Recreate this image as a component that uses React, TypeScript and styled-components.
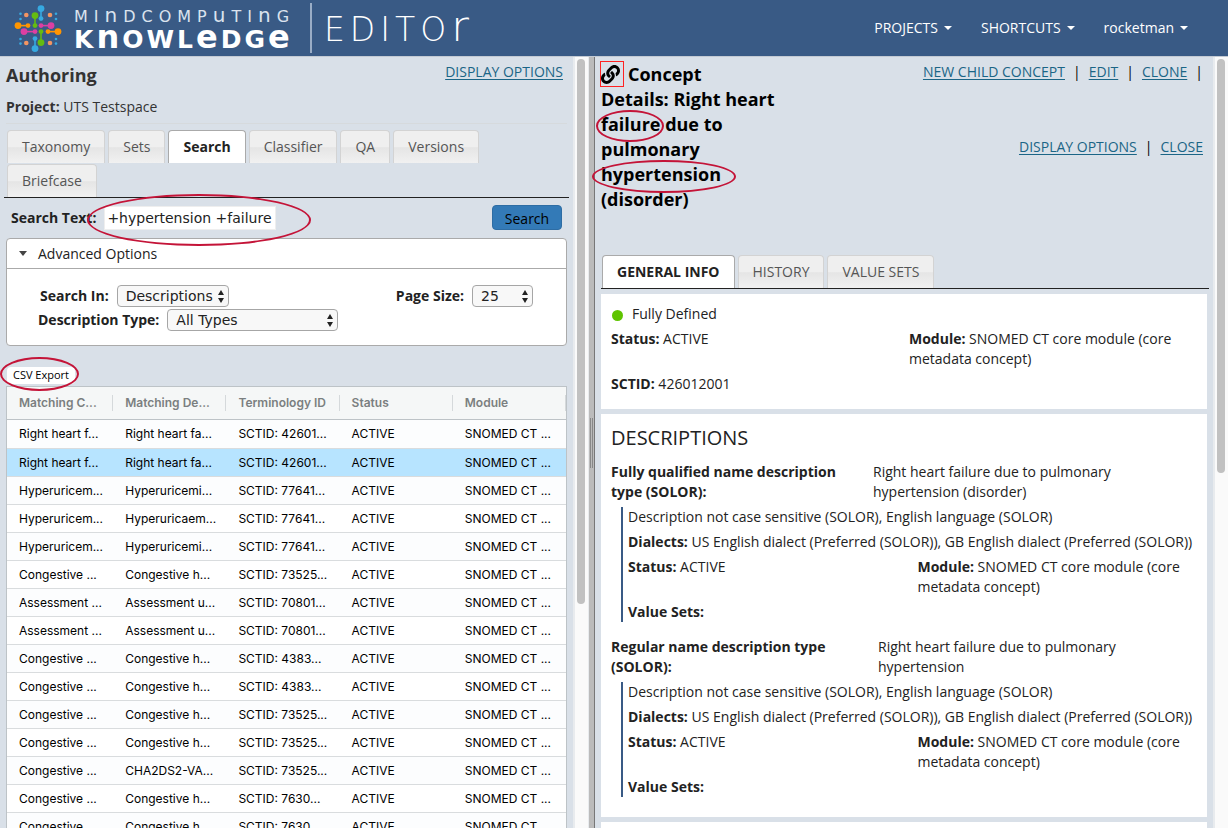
import React from 'react';
import styled, { createGlobalStyle, css } from 'styled-components';
import { FaLink } from 'react-icons/fa';

const sans = '"Open Sans", "Noto Sans", sans-serif';
const wide = '"DejaVu Sans", Verdana, sans-serif';
const gridFont = 'Inter, Roboto, sans-serif';

const GlobalStyle = createGlobalStyle`
  *, *::before, *::after { box-sizing: border-box; }
  body {
    margin: 0;
    background: #d9e0e8;
    color: #222;
    font: 14px/20px ${sans};
  }
  h1, h2, p { margin: 0; }
`;

const Page = styled.div`
  display: flex;
  flex-direction: column;
  height: 100vh;
  overflow: hidden;
`;

/* ---------- header ---------- */

const Header = styled.header`
  display: flex;
  flex: none;
  align-items: center;
  justify-content: space-between;
  height: 56px;
  padding: 0 40px 0 13px;
  background: #395a85;
  color: #fff;
`;

const Brand = styled.a`
  display: flex;
  align-items: center;
  color: #fff;
  text-decoration: none;
  font-family: ${wide};
`;

const Wordmark = styled.span`
  display: flex;
  flex-direction: column;
  width: 227px;
  margin-left: 11px;
  white-space: nowrap;
`;

const BrandTop = styled.span`
  font-size: 16px;
  line-height: 18px;
  letter-spacing: 6px;
  color: #dbe3ee;
  big { font-size: 20px; line-height: 18px; }
`;

const BrandMain = styled.span`
  font-size: 25px;
  font-weight: 700;
  line-height: 22px;
  letter-spacing: 3px;
  big { font-size: 32px; line-height: 22px; }
`;

const BrandProduct = styled.span`
  margin-left: 9px;
  padding-left: 12px;
  border-left: 2px solid #9aadc6;
  font-size: 33px;
  font-weight: 200;
  line-height: 46px;
  letter-spacing: 5px;
  big { font-size: 43px; line-height: 46px; }
`;

const Nav = styled.nav`
  display: flex;
  gap: 29px;
`;

const NavButton = styled.button`
  display: flex;
  align-items: center;
  gap: 6px;
  padding: 0;
  border: 0;
  background: none;
  color: #fff;
  font: 14px/20px ${sans};
  &::after {
    content: '';
    border: 4px solid transparent;
    border-top-color: #fff;
    border-bottom: 0;
  }
`;

/* ---------- panes ---------- */

const Workspace = styled.main`
  display: flex;
  flex: 1;
  min-height: 0;
  border-top: 1px solid #c3cad3;
  overflow: hidden;
`;

const Pane = styled.section<{ $grow: number }>`
  flex: ${p => p.$grow} 1 12px;
  min-width: 0;
  padding: 5px 6px 0;
`;

const Track = styled.div`
  flex: none;
  width: 15px;
  padding: 2px;
  border-left: 2px solid #e8ebee;
  background: #fafafa;
`;

const Thumb = styled.div<{ $size: number }>`
  width: 8px;
  height: ${p => p.$size}%;
  border-radius: 4px;
  background: #c1c1c1;
`;

const Splitter = styled.div`
  display: flex;
  flex: none;
  align-items: center;
  justify-content: center;
  width: 7px;
  border-left: 1px solid #e8ebee;
  border-right: 1px solid #777;
  background: #bbb;
  &::after {
    content: '';
    width: 3px;
    height: 50px;
    border: solid #888;
    border-width: 0 1px;
  }
`;

const Link = styled.a`
  color: #1b6586;
  text-decoration: underline;
  text-underline-offset: 2px;
`;

const Mark = styled.span`
  position: relative;
  display: inline-block;
`;

/* hand-drawn style highlight over the marked text */
const Ring = styled.span<{ $inset: string }>`
  position: absolute;
  inset: ${p => p.$inset};
  z-index: 2;
  border: 2px solid #c41438;
  border-radius: 50%;
  pointer-events: none;
`;

/* ---------- tabs ---------- */

const Tabs = styled.div<{ $side?: number }>`
  display: flex;
  flex-wrap: wrap;
  gap: 1px 3px;
  margin: 0 -2px 0 ${p => p.$side ?? 0}px;
  padding-left: ${p => (p.$side ? 3 : 1)}px;
  border-bottom: 1px solid #222;
`;

const Tab = styled.button<{ $active?: boolean }>`
  height: 33px;
  padding: 0 14px;
  border: 1px solid #d3d3d3;
  border-bottom: 0;
  border-radius: 4px 4px 0 0;
  background: linear-gradient(#efefef 0 50%, #e5e5e5 52%, #f1f1f1);
  color: #555;
  font: 14px/20px ${sans};
  ${p => p.$active && css`
    border-color: #aaa;
    background: #fff;
    color: #222;
    font-weight: 700;
  `}
`;

/* ---------- authoring pane ---------- */

const TopRow = styled.div`
  display: flex;
  justify-content: space-between;
  padding-right: 4px;
`;

const Title = styled.h1`
  color: #333;
  font-size: 18px;
  font-weight: 700;
  line-height: 26px;
`;

const Project = styled.p`
  margin: 9px 0 6px;
  padding-bottom: 6px;
  border-bottom: 1px solid #d6dadd;
  color: #333;
`;

const SearchRow = styled.form`
  display: flex;
  align-items: center;
  justify-content: space-between;
  padding: 7px 5px 8px;
`;

const Field = styled.div`
  display: flex;
  align-items: center;
  gap: 8px;
  label { font-weight: 700; }
`;

const TextInput = styled.input`
  width: 172px;
  height: 24px;
  padding: 0 2px;
  border: 1px solid #eee;
  background: #fff;
  color: #222;
  font: 14px/20px ${wide};
`;

const PrimaryButton = styled.button`
  width: 70px;
  height: 25px;
  padding: 2px 0 0;
  border: 1px solid #2e6da4;
  border-radius: 4px;
  background: #337ab7;
  color: #000;
  font: 14px/20px ${sans};
`;

const Panel = styled.section`
  height: 108px;
  border: 1px solid #aaa;
  border-radius: 4px;
  background: #fff;
`;

const PanelHead = styled.button`
  display: flex;
  align-items: center;
  gap: 11px;
  width: 100%;
  height: 30px;
  padding: 0 12px;
  border: 0;
  border-bottom: 1px solid #aaa;
  background: none;
  color: #222;
  font: 14px/20px ${sans};
  &::before {
    content: '';
    border: 4px solid transparent;
    border-top: 5px solid #444;
    border-bottom: 0;
  }
`;

const Options = styled.div`
  display: flex;
  flex-direction: column;
  gap: 2px;
  padding: 16px 33px 0 31px;
`;

const OptionRow = styled.div`
  display: flex;
  justify-content: space-between;
  &:first-child { padding-left: 2px; }
`;

const Picker = styled.span<{ $width: number }>`
  position: relative;
  width: ${p => p.$width}px;
  height: 22px;
  select {
    width: 100%;
    height: 22px;
    padding: 0 8px;
    border: 1px solid #a6a6a6;
    border-radius: 4px;
    appearance: none;
    background: #f8f8f8;
    color: #222;
    font: 14px/20px ${wide};
  }
  svg {
    position: absolute;
    top: 5px;
    right: 4px;
    pointer-events: none;
  }
`;

const ExportMark = styled(Mark)`
  display: block;
  width: 68px;
  margin: 21px 0 2px 1px;
`;

const ExportButton = styled.button`
  display: block;
  width: 68px;
  height: 17px;
  padding: 0 0 2px;
  border: 0;
  border-radius: 4px;
  background: #fff;
  color: #000;
  font: 11px/15px ${sans};
`;

const Grid = styled.table`
  width: 100%;
  border-collapse: separate;
  border-spacing: 0;
  table-layout: fixed;
  border: 1px solid #bdc3c7;
  background: #fff;
  font-family: ${gridFont};
  font-size: 12px;
  color: #000;
  th, td {
    padding: 0 4px 0 12px;
    overflow: hidden;
    text-align: left;
    text-overflow: ellipsis;
    white-space: nowrap;
  }
  th {
    height: 33px;
    border-bottom: 1px solid #bdc3c7;
    background: linear-gradient(#d5d9db, #d5d9db) right center / 1px 16px no-repeat #f5f7f7;
    color: #7b7f80;
    font-weight: 600;
  }
`;

const GridRow = styled.tr<{ $selected?: boolean }>`
  height: 28px;
  background: ${p => (p.$selected ? '#b7e4ff' : '#fff')};
  &:nth-child(odd) { background: ${p => (p.$selected ? '#b7e4ff' : '#fcfdfe')}; }
  td { border-bottom: 1px solid #d9dcde; }
  &:first-child { height: 29px; }
`;

/* ---------- concept pane ---------- */

const ConceptHead = styled.div`
  display: flex;
  justify-content: space-between;
  min-height: 193px;
`;

const ConceptTitle = styled.h1`
  width: 200px;
  color: #000;
  font-size: 18px;
  font-weight: 700;
  line-height: 25px;
`;

const Permalink = styled.a`
  display: inline-flex;
  align-items: center;
  width: 24px;
  height: 26px;
  margin: -1px 4px 0 -1px;
  border: 1px solid #f22;
  color: #000;
  vertical-align: top;
`;

const Actions = styled.div`
  display: flex;
  flex-direction: column;
  align-items: flex-end;
  gap: 55px;
  padding-right: 4px;
`;

const ActionRow = styled.div`
  display: flex;
  gap: 8px;
  color: #000;
`;

const Card = styled.section<{ $bottom?: number }>`
  margin-top: 5px;
  padding: 10px 10px ${p => p.$bottom ?? 15}px;
  background: #fff;
`;

const Stack = styled.div`
  display: flex;
  flex-direction: column;
  gap: 5px;
`;

const Columns = styled.div`
  display: grid;
  grid-template-columns: 1fr 1fr;
  gap: 10px;
`;

const Defined = styled.p`
  display: flex;
  align-items: center;
  gap: 9px;
  padding-left: 1px;
  &::before {
    content: '';
    width: 11px;
    height: 11px;
    margin-top: 3px;
    border-radius: 50%;
    background: #5fc400;
  }
`;

const SectionTitle = styled.h2`
  font-size: 20px;
  font-weight: 400;
  line-height: 28px;
`;

const Description = styled.article`
  display: flex;
  flex-direction: column;
  gap: 5px;
  margin-top: 15px;
  ${SectionTitle} + & { margin-top: 10px; }
`;

const DescriptionHead = styled.div<{ $label: number }>`
  display: grid;
  grid-template-columns: ${p => p.$label}fr ${p => 586 - p.$label}fr;
  strong { padding-right: 16px; }
`;

const Detail = styled(Stack)`
  margin-left: 10px;
  padding-left: 5px;
  border-left: 2px solid #395a85;
`;

/* ---------- drawings ---------- */

const blue = '#36a9e1';
const green = '#65bc10';
const orange = '#ff9500';
const pink = '#dd3fa2';
const salmon = '#f39562';

const links: [string, number, number, number, number][] = [
  [blue, 28, 8, 28, 18],
  [green, 22, 15, 22, 25],
  [orange, 5, 25, 15, 25],
  [pink, 38, 25, 28, 25],
  [pink, 11, 31, 22, 31],
  [orange, 45, 31, 35, 31],
  [green, 28, 42, 28, 31],
  [blue, 22, 48, 22, 38],
];

const LogoMark = () => (
  <svg width="50" height="56" viewBox="0 0 50 56" aria-hidden="true">
    {links.map(([color, x1, y1, x2, y2]) => (
      <g key={`${x1}-${y1}`} fill={color} stroke={color}>
        <line x1={x1} y1={y1 + 0.6} x2={x2} y2={y2 + 0.6} strokeWidth="1.6" />
        <circle cx={x1} cy={y1 + 0.6} r="3.4" stroke="none" />
        <circle cx={x2} cy={y2 + 0.6} r="2.4" stroke="none" />
      </g>
    ))}
    {[13.3, 37].map(x => [15, 43].map(y => (
      <circle key={`${x}${y}`} cx={x} cy={y} r="2.3" fill={salmon} />
    )))}
    {[7.5, 43].map(x => [13.7, 19, 39, 43.6].map(y => (
      <circle key={`${x}${y}`} cx={x} cy={y} r="1.3" fill={blue} />
    )))}
  </svg>
);

const UpDown = () => (
  <svg width="8" height="13" viewBox="0 0 8 13" fill="#222" aria-hidden="true">
    <path d="M4 0 7 5H1Z" />
    <path d="M4 13 1 8h6Z" />
  </svg>
);

/* ---------- data ---------- */

const rows: [string, string, string][] = [
  ['Right heart f...', 'Right heart fa...', 'SCTID: 42601...'],
  ['Right heart f...', 'Right heart fa...', 'SCTID: 42601...'],
  ['Hyperuricem...', 'Hyperuricemi...', 'SCTID: 77641...'],
  ['Hyperuricem...', 'Hyperuricaem...', 'SCTID: 77641...'],
  ['Hyperuricem...', 'Hyperuricemi...', 'SCTID: 77641...'],
  ['Congestive ...', 'Congestive h...', 'SCTID: 73525...'],
  ['Assessment ...', 'Assessment u...', 'SCTID: 70801...'],
  ['Assessment ...', 'Assessment u...', 'SCTID: 70801...'],
  ['Congestive ...', 'Congestive h...', 'SCTID: 4383...'],
  ['Congestive ...', 'Congestive h...', 'SCTID: 4383...'],
  ['Congestive ...', 'Congestive h...', 'SCTID: 73525...'],
  ['Congestive ...', 'Congestive h...', 'SCTID: 73525...'],
  ['Congestive ...', 'CHA2DS2-VA...', 'SCTID: 73525...'],
  ['Congestive ...', 'Congestive h...', 'SCTID: 7630...'],
  ['Congestive ...', 'Congestive h...', 'SCTID: 7630...'],
];

const headings = ['Matching C...', 'Matching De...', 'Terminology ID', 'Status', 'Module'];

const ModuleText = () => (
  <p><strong>Module:</strong> SNOMED CT core module (core metadata concept)</p>
);

const DescriptionEntry = ({ label, value, width }: { label: string; value: string; width: number }) => (
  <Description>
    <DescriptionHead $label={width}>
      <strong>{label}</strong>
      <span>{value}</span>
    </DescriptionHead>
    <Detail>
      <p>Description not case sensitive (SOLOR), English language (SOLOR)</p>
      <p><strong>Dialects:</strong> US English dialect (Preferred (SOLOR)), GB English dialect (Preferred (SOLOR))</p>
      <Columns>
        <p><strong>Status:</strong> ACTIVE</p>
        <ModuleText />
      </Columns>
      <p><strong>Value Sets:</strong></p>
    </Detail>
  </Description>
);

const AuthoringPane = () => (
  <Pane $grow={561}>
    <TopRow>
      <Title>Authoring</Title>
      <Link href="#display">DISPLAY OPTIONS</Link>
    </TopRow>
    <Project><strong>Project:</strong> UTS Testspace</Project>
    <Tabs $side={-2}>
      {['Taxonomy', 'Sets', 'Search', 'Classifier', 'QA', 'Versions', 'Briefcase'].map(name => (
        <Tab key={name} type="button" $active={name === 'Search'}>{name}</Tab>
      ))}
    </Tabs>
    <SearchRow onSubmit={e => e.preventDefault()}>
      <Field>
        <label htmlFor="search-text">Search Text:</label>
        <Mark>
          <TextInput id="search-text" defaultValue="+hypertension +failure" />
          <Ring $inset="-12px -35px -16px -17px" />
        </Mark>
      </Field>
      <PrimaryButton type="submit">Search</PrimaryButton>
    </SearchRow>
    <Panel>
      <PanelHead type="button">Advanced Options</PanelHead>
      <Options>
        <OptionRow>
          <Field>
            <label htmlFor="search-in">Search In:</label>
            <Picker $width={112}>
              <select id="search-in"><option>Descriptions</option></select>
              <UpDown />
            </Picker>
          </Field>
          <Field>
            <label htmlFor="page-size">Page Size:</label>
            <Picker $width={61}>
              <select id="page-size"><option>25</option></select>
              <UpDown />
            </Picker>
          </Field>
        </OptionRow>
        <OptionRow>
          <Field>
            <label htmlFor="description-type">Description Type:</label>
            <Picker $width={171}>
              <select id="description-type"><option>All Types</option></select>
              <UpDown />
            </Picker>
          </Field>
        </OptionRow>
      </Options>
    </Panel>
    <ExportMark>
      <ExportButton type="button">CSV Export</ExportButton>
      <Ring $inset="-10px -4px -7px -7px" />
    </ExportMark>
    <Grid>
      <colgroup>
        <col width="19%" />
        <col /><col /><col /><col />
      </colgroup>
      <thead>
        <tr>{headings.map(h => <th key={h}>{h}</th>)}</tr>
      </thead>
      <tbody>
        {rows.map(([concept, description, id], i) => (
          <GridRow key={i} $selected={i === 1}>
            <td>{concept}</td>
            <td>{description}</td>
            <td>{id}</td>
            <td>ACTIVE</td>
            <td>SNOMED CT ...</td>
          </GridRow>
        ))}
      </tbody>
    </Grid>
  </Pane>
);

const ConceptPane = () => (
  <Pane $grow={606}>
    <ConceptHead>
      <ConceptTitle>
        <Permalink href="#concept" aria-label="Permalink"><FaLink size={19} /></Permalink>
        Concept<br />
        Details: Right heart <Mark>failure<Ring $inset="-2px -4px -5px -5px" /></Mark> due to pulmonary{' '}
        <Mark>hypertension<Ring $inset="-2px -15px -6px -9px" /></Mark> (disorder)
      </ConceptTitle>
      <Actions>
        <ActionRow>
          <Link href="#new">NEW CHILD CONCEPT</Link> |
          <Link href="#edit">EDIT</Link> |
          <Link href="#clone">CLONE</Link> |
        </ActionRow>
        <ActionRow>
          <Link href="#display">DISPLAY OPTIONS</Link> |
          <Link href="#close">CLOSE</Link>
        </ActionRow>
      </Actions>
    </ConceptHead>
    <Tabs>
      {['GENERAL INFO', 'HISTORY', 'VALUE SETS'].map((name, i) => (
        <Tab key={name} type="button" $active={i === 0}>{name}</Tab>
      ))}
    </Tabs>
    <Card>
      <Stack>
        <Defined>Fully Defined</Defined>
        <Columns>
          <p><strong>Status:</strong> ACTIVE</p>
          <ModuleText />
        </Columns>
        <p><strong>SCTID:</strong> 426012001</p>
      </Stack>
    </Card>
    <Card $bottom={20}>
      <SectionTitle>DESCRIPTIONS</SectionTitle>
      <DescriptionEntry
        label="Fully qualified name description type (SOLOR):"
        value="Right heart failure due to pulmonary hypertension (disorder)"
        width={262}
      />
      <DescriptionEntry
        label="Regular name description type (SOLOR):"
        value="Right heart failure due to pulmonary hypertension"
        width={267}
      />
    </Card>
    <Card />
  </Pane>
);

export default function App() {
  return (
    <Page>
      <GlobalStyle />
      <Header>
        <Brand href="#home">
          <LogoMark />
          <Wordmark>
            <BrandTop>MI<big>n</big>DCOMP<big>u</big>TI<big>n</big>G</BrandTop>
            <BrandMain>K<big>n</big>OWL<big>e</big>DG<big>e</big></BrandMain>
          </Wordmark>
          <BrandProduct>EDITO<big>r</big></BrandProduct>
        </Brand>
        <Nav>
          <NavButton type="button">PROJECTS</NavButton>
          <NavButton type="button">SHORTCUTS</NavButton>
          <NavButton type="button">rocketman</NavButton>
        </Nav>
      </Header>
      <Workspace>
        <AuthoringPane />
        <Track><Thumb $size={71} /></Track>
        <Splitter />
        <ConceptPane />
        <Track><Thumb $size={54} /></Track>
      </Workspace>
    </Page>
  );
}
